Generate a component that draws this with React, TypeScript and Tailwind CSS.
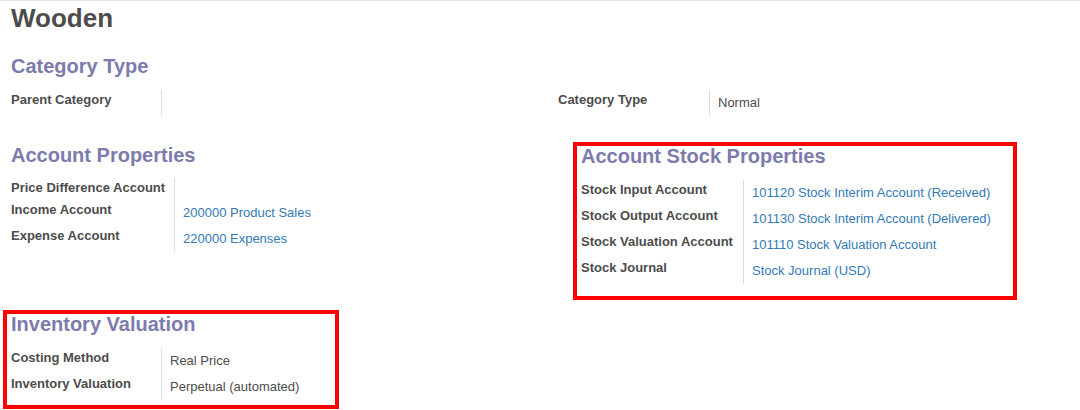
const font = { fontFamily: '"Liberation Sans", Arial, sans-serif' }

type Row = { label: string; value?: string; link?: boolean; h?: string }

function FieldRows({ rows, labelW }: { rows: Row[]; labelW: string }) {
  return (
    <div className="flex flex-col">
      {rows.map((r) => (
        <div key={r.label} className={`flex ${r.h ?? "h-[26px]"}`}>
          <div
            className={`${labelW} shrink-0 border-r border-[#dddddd] pt-[1px] text-[13px] font-bold leading-[18px] whitespace-nowrap text-[#4c4c4c]`}
          >
            {r.label}
          </div>
          <div
            className={`pl-[8px] pt-[4px] text-[13px] leading-[18px] whitespace-nowrap ${
              r.link ? "text-[#337ab7]" : "text-[#4c4c4c]"
            }`}
          >
            {r.value}
          </div>
        </div>
      ))}
    </div>
  )
}

export default function App() {
  return (
    <div
      style={font}
      className="h-[410px] w-[1080px] overflow-hidden border-t border-[#e6e6e6] bg-white"
    >
      <h1 className="mt-[2px] px-[11px] text-[26px] font-bold leading-[30px] text-[#4c4c4c]">
        Wooden
      </h1>

      <h2 className="mt-[21px] px-[11px] text-[20px] font-bold leading-[24px] text-[#7c7bad]">
        Category Type
      </h2>
      <div className="mt-[12px] grid grid-cols-2">
        <div className="pl-[11px]">
          <FieldRows labelW="w-[151px]" rows={[{ label: "Parent Category" }]} />
        </div>
        <div className="pl-[18px]">
          <FieldRows labelW="w-[152px]" rows={[{ label: "Category Type", value: "Normal" }]} />
        </div>
      </div>

      <div className="mt-[26px] grid grid-cols-2 items-start">
        <div className="pl-[11px]">
          <h2 className="mt-[1px] text-[20px] font-bold leading-[24px] text-[#7c7bad]">
            Account Properties
          </h2>
          <div className="mt-[11px]">
            <FieldRows
              labelW="w-[164px]"
              rows={[
                { label: "Price Difference Account", h: "h-[22px]" },
                { label: "Income Account", value: "200000 Product Sales", link: true },
                { label: "Expense Account", value: "220000 Expenses", link: true },
              ]}
            />
          </div>
        </div>
        <div className="pl-[33px]">
          <div className="w-[444px] border-4 border-[#ff0000] pb-[12px] pl-[4px]">
            <h2 className="text-[20px] font-bold leading-[20px] text-[#7c7bad]">
              Account Stock Properties
            </h2>
            <div className="mt-[14px]">
              <FieldRows
                labelW="w-[163px]"
                rows={[
                  { label: "Stock Input Account", value: "101120 Stock Interim Account (Received)", link: true },
                  { label: "Stock Output Account", value: "101130 Stock Interim Account (Delivered)", link: true },
                  { label: "Stock Valuation Account", value: "101110 Stock Valuation Account", link: true },
                  { label: "Stock Journal", value: "Stock Journal (USD)", link: true },
                ]}
              />
            </div>
          </div>
        </div>
      </div>

      <div className="ml-[3px] mt-[10px] w-[336px] border-4 border-[#ff0000] pb-[5px] pl-[4px]">
        <h2 className="text-[20px] font-bold leading-[20px] text-[#7c7bad]">Inventory Valuation</h2>
        <div className="mt-[14px]">
          <FieldRows
            labelW="w-[151px]"
            rows={[
              { label: "Costing Method", value: "Real Price" },
              { label: "Inventory Valuation", value: "Perpetual (automated)" },
            ]}
          />
        </div>
      </div>
    </div>
  )
}
